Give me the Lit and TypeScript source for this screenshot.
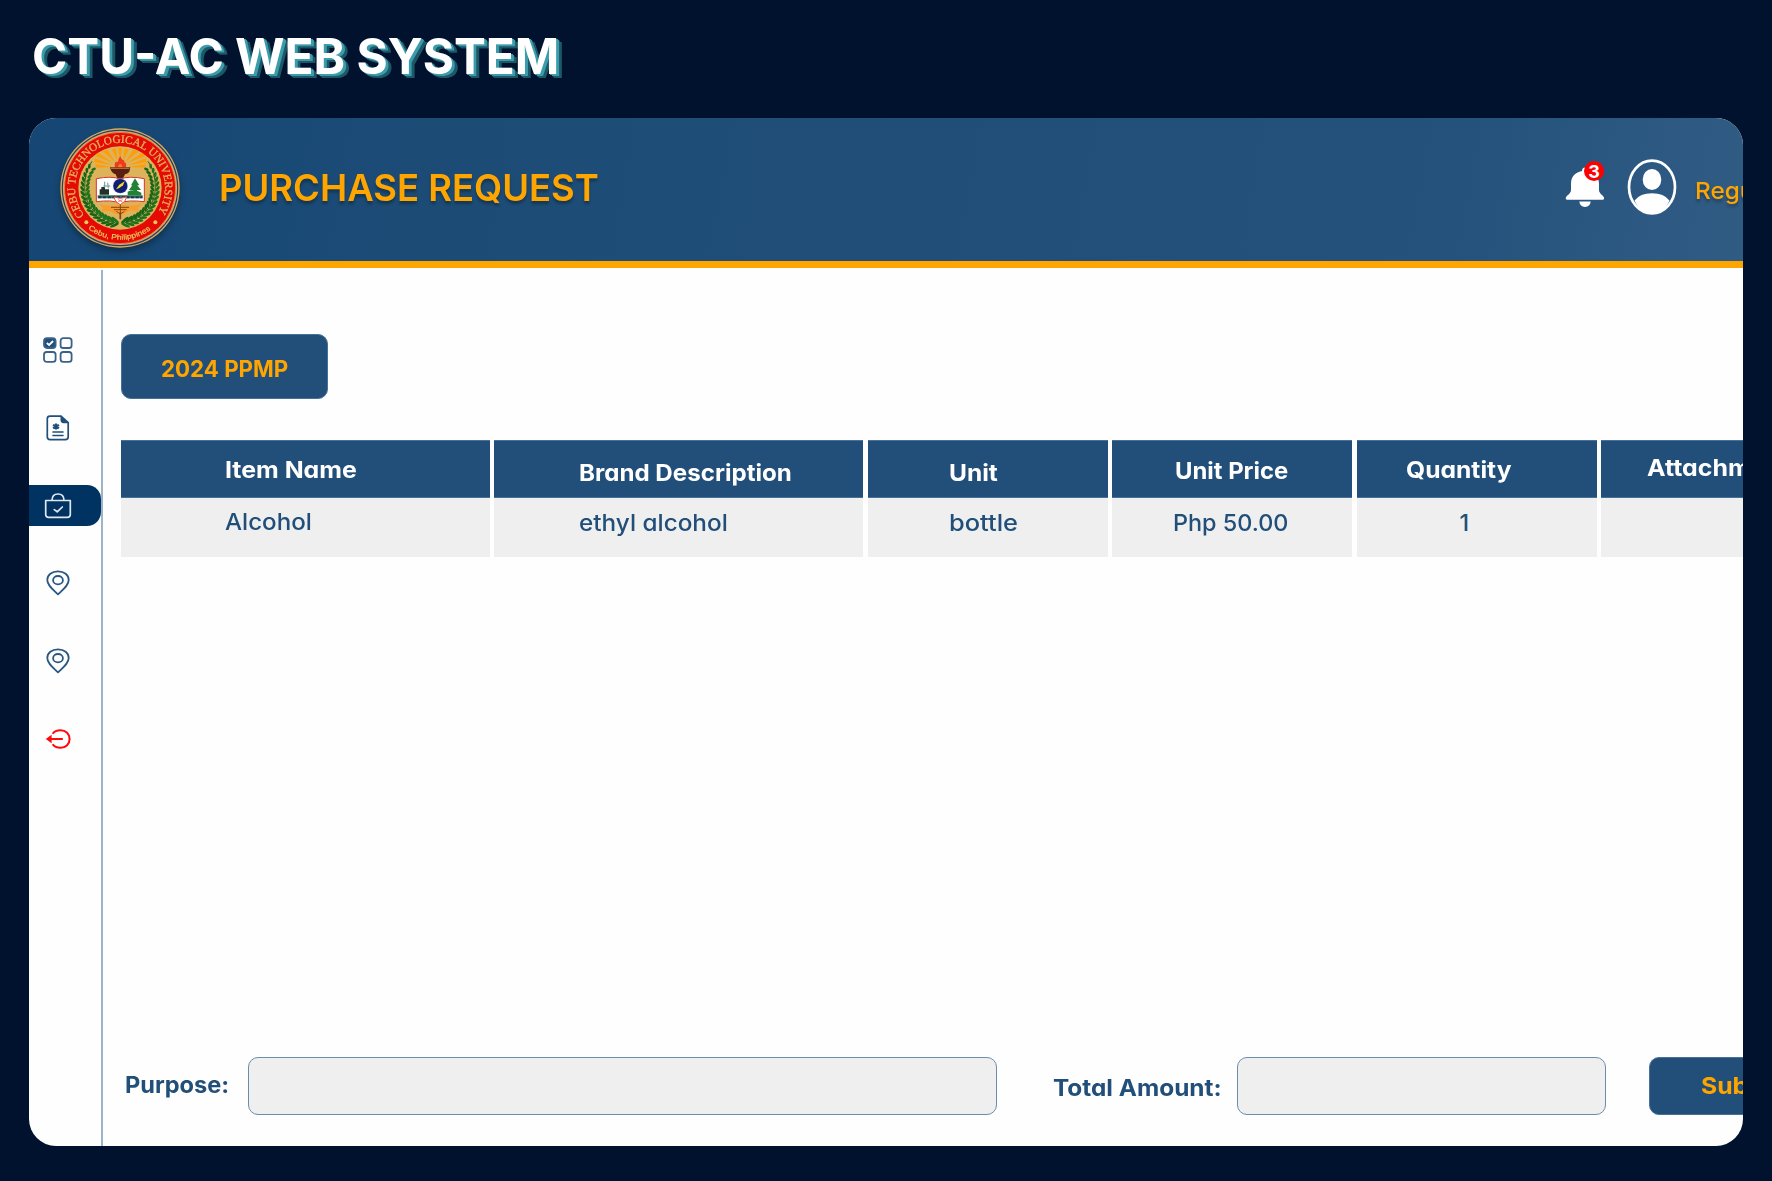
import { LitElement, html, svg, css } from "lit";
import { customElement, property } from "lit/decorators.js";

/** A line of text stretched to a set advance width. */
@customElement("ui-label")
class UiLabel extends LitElement {
  @property() text = "";
  @property({ type: Number }) width = 100;

  static styles = css`
    :host { display: block; flex: none; white-space: nowrap; }
    .ink { display: inline-block; transform-origin: 0 50%; vertical-align: top; }
  `;

  updated() {
    this.fit();
    document.fonts?.ready.then(() => this.fit());
  }

  fit() {
    const ink = this.renderRoot.querySelector<HTMLElement>(".ink");
    if (!ink) return;
    this.style.width = this.width + "px";
    const natural = ink.offsetWidth;
    if (natural) ink.style.transform = `scaleX(${this.width / natural})`;
  }

  render() {
    return html`<span class="ink">${this.text}</span>`;
  }
}

const leaves = [-1, 1].flatMap((side) =>
  Array.from({ length: 17 }, (_, i) => {
    const a = 8 + i * 7.3;
    const rad = (a * Math.PI) / 180;
    const r = 105;
    const x = 180 + side * r * Math.sin(rad);
    const y = 180 + r * Math.cos(rad);
    const size = 14 - i * 0.42;
    const base = side > 0 ? -a : a + 180;
    return { x, y, size, turn: base };
  })
);

@customElement("school-seal")
class SchoolSeal extends LitElement {
  static styles = css`
    :host { display: block; flex: none; filter: drop-shadow(0 4px 3px rgba(0, 0, 0, 0.3)); }
    .seal { display: block; width: 120px; height: 120px; }
    .serif { font: 34px "Liberation Serif", serif; fill: #e3b55e; stroke: #e3b55e; stroke-width: 0.9; }
    .sans { font: 22px "Liberation Sans", sans-serif; fill: #f0c75e; stroke: #f0c75e; stroke-width: 0.6; }
  `;

  render() {
    return html`
      <svg class="seal" viewBox="0 0 360 360">
        <defs>
          <path id="upper" d="M73 262A135 135 0 1 1 287 262" />
          <path id="lower" d="M84 302A155 155 0 0 0 276 302" />
        </defs>
        <circle cx="180" cy="180" r="179" fill="#d6ad5c" />
        <circle cx="180" cy="180" r="173" fill="none" stroke="#2b3b6b" stroke-width="3.5" />
        <circle cx="180" cy="180" r="167" fill="#e60a05" stroke="#e2a258" stroke-width="2" />
        <circle cx="180" cy="180" r="125" fill="#dcb35b" />
        <text class="serif"><textPath href="#upper" textLength="590" lengthAdjust="spacingAndGlyphs">CEBU TECHNOLOGICAL UNIVERSITY</textPath></text>
        <text class="sans"><textPath href="#lower" textLength="202" lengthAdjust="spacingAndGlyphs">Cebu, Philippines</textPath></text>
        <circle cx="79" cy="283" r="6" fill="#f0c75e" />
        <circle cx="286" cy="283" r="6" fill="#f0c75e" />
        <path fill="#ff9d08" d="M173 100L155 64 168 61zM180 98L174 60H187zM189 100L194 61 207 64zM167 103L127 69 142 65zM195 103L220 65 236 69zM162 106L107 84 116 75zM200 106L246 75 256 84zM158 111L103 103 105 91zM205 111L257 91 260 103zM158 117L108 119 106 109zM205 117L257 109 255 119z" />
        <path fill="#ef3a1d" d="M165 119Q161 99 174 102Q175 91 181 84Q184 96 192 97L193 103Q202 105 197 119Z" />
        <path fill="#ff7a21" d="M174 119Q176 105 184 109L188 119Z" />
        <path fill="#5b1f12" d="M150 118H211L208 131Q203 137 195 139L188 153H173L167 139Q154 136 150 118Z" />
        <path fill="#b8673b" d="M153 119H208V123H153Z" />
        <path fill="#fff" stroke="#d3372b" stroke-width="3" d="M109 152Q154 143 180 153Q208 143 253 152V221Q204 215 180 225Q155 215 109 221Z" />
        <path fill="#22302a" d="M119 184H147V200H119zM124 177H135V186H124z" />
        <path fill="none" stroke="#6a93a5" stroke-width="3" d="M134 161V179M143 164L145 181M130 174H151" />
        <path fill="#218236" d="M225 151L238 172H232L243 186H231V193H221V186H207L217 172H213ZM203 191Q220 181 244 194V202H203Z" />
        <path fill="#2a7650" d="M113 202H248V211H113Z" />
        <path fill="none" stroke="#29305f" stroke-width="6" stroke-dasharray="9 5" d="M115 208H247" />
        <circle cx="181" cy="174" r="22" fill="#101c75" stroke="#d9ddef" />
        <path fill="#f5df20" d="M168 184L178 170 194 160 189 172 178 180Z" />
        <path fill="#fff" stroke="#e64e49" stroke-width="3" d="M162 207L181 211 200 207Q198 221 181 230Q165 222 162 207Z" />
        <path fill="none" stroke="#e64e49" stroke-width="2" d="M174 215L188 222M188 215L174 222" />
        <path fill="#fa9c2d" d="M118 228Q150 238 181 229Q211 238 246 228L233 241 239 249 209 247 193 259H168L151 249 123 250 130 241Z" />
        <path fill="none" stroke="#7c491c" stroke-width="3" d="M153 238H207M162 245H200M181 229V274M169 250L181 258 193 250" />
        <path fill="none" stroke="#8a3f20" stroke-width="5" d="M181 253V273" />
        <path fill="none" stroke="#22641c" stroke-width="3" d="M167 285Q80 262 74 184Q73 130 96 100M193 285Q280 262 286 184Q287 130 264 100" />
        ${leaves.map(
          (l) => svg`<g transform="translate(${l.x} ${l.y}) rotate(${l.turn})">
            <ellipse cx="5" cy="-6" rx=${l.size} ry="4.2" fill="#176419" transform="rotate(-32)" />
            <ellipse cx="5" cy="6" rx=${l.size} ry="4.2" fill="#1f721d" transform="rotate(32)" />
          </g>`
        )}
      </svg>
    `;
  }
}

const icons = {
  grid: svg`<svg width="30" height="26" viewBox="0 0 30 26" fill="none" stroke="#3a6289" stroke-width="1.8">
    <rect x="1" y="1.2" width="11.6" height="9.8" rx="3" fill="#214f79"/><rect x="17.6" y="1.2" width="11" height="9.8" rx="2.6"/>
    <rect x="1" y="15" width="11.6" height="9.8" rx="2.6"/><rect x="17.6" y="15" width="11" height="9.8" rx="2.6"/>
    <path stroke="#fff" stroke-width="1.8" d="M3.8 6l2.3 2 4-4"/></svg>`,
  doc: svg`<svg width="24" height="26" viewBox="0 0 24 26" fill="none" stroke="#214f79" stroke-width="1.7">
    <path d="M4 1.2H15L22.2 7.7V22q0 2.6-2.8 2.6H4Q1.3 24.6 1.3 22V3.8Q1.3 1.2 4 1.2Z"/>
    <path fill="#214f79" stroke="none" d="M14.5 1L22.7 8.3H17.5Q14.5 8 14.5 5Z"/>
    <path d="M7 17H17M7 20.5H17" stroke-width="1.6" stroke-linecap="round"/>
    <path stroke-width="2.200" d="M10 8.500V14.500M7 10L13 13M13 10L7 13"/></svg>`,
  bag: svg`<svg width="28" height="28" viewBox="0 0 28 28" fill="none" stroke="#dfe7ef" stroke-width="1.7" stroke-linejoin="round">
    <path d="M1.7 8.500H26.300V22.500q0 2.800-3 2.800H4.700q-3 0-3-2.800Z"/>
    <path d="M8 8.500Q8 2 14 2T20 8.500"/><path stroke-linecap="round" d="M10.300 17.600L13.200 19.800 18.300 15"/></svg>`,
  pin: svg`<svg width="24" height="26" viewBox="0 0 24 26" fill="none" stroke="#2a5780" stroke-width="1.8">
    <path stroke-linejoin="round" d="M12 24.300C7 19.500 1.300 15.500 1.300 10C1.300 5 5.800 1.300 12 1.300S22.700 5 22.700 10C22.700 15.500 17 19.500 12 24.300Z"/>
    <ellipse cx="12" cy="10.200" rx="4.900" ry="4.200"/></svg>`,
  exit: svg`<svg width="26" height="20" viewBox="0 0 26 20" fill="none" stroke="#fe0a0a" stroke-width="2">
    <path d="M7.600 4.700Q10 1.200 15.500 1.200C21 1.200 24.600 5 24.600 10S21 18.800 15.500 18.800Q10 18.800 7.600 15.300"/>
    <path d="M5 10H17.800"/><path fill="#fe0a0a" stroke="none" d="M.8 10L6.600 5.800V14.200Z"/></svg>`,
};

const nav = [
  { icon: icons.grid, active: false },
  { icon: icons.doc, active: false },
  { icon: icons.bag, active: true },
  { icon: icons.pin, active: false },
  { icon: icons.pin, active: false },
  { icon: icons.exit, active: false },
];

/* text, inset from the left, inset from the top, width */
type Cell = [string, number, number, number];
const columns: { span: number; head: Cell; cell?: Cell }[] = [
  { span: 368.5, head: ["Item Name", 103.5, 12.5, 132], cell: ["Alcohol", 103.5, 7.5, 87] },
  { span: 369, head: ["Brand Description", 85, 15.5, 213], cell: ["ethyl alcohol", 85, 8.5, 149] },
  { span: 240, head: ["Unit", 81, 15.5, 49], cell: ["bottle", 81, 8.5, 68.5] },
  { span: 240, head: ["Unit Price", 63, 13.5, 113], cell: ["Php 50.00", 61, 8.5, 115] },
  { span: 240, head: ["Quantity", 49.5, 12.5, 105], cell: ["1", 102.5, 8.5, 10] },
  { span: 240, head: ["Attachment", 46, 10.5, 143] },
];

@customElement("app-root")
class AppRoot extends LitElement {
  static styles = css`
    :host {
      display: block;
      font-family: Inter, "Open Sans", sans-serif;
      font-feature-settings: "cv11";
      color: #214f79;
    }
    * { box-sizing: border-box; }
    .page {
      height: 1181px;
      background: #00122d;
      padding: 28px 29px 0;
      display: flex;
      flex-direction: column;
      overflow: hidden;
    }
    .brand {
      height: 90px;
      padding-left: 3px;
      font-size: 50px;
      line-height: 56px;
      font-weight: 700;
      color: #fff;
      text-shadow: 1px 1px #3c9cac, 2px 1px #3c9cac, 3px 2px #3c9cac, 4px 3px #1d5867, 5px 4px #1d5867, 6px 4px #1d5867;
    }
    .card {
      flex: none;
      width: 1714px;
      height: 1028px;
      border-radius: 27px;
      background: #fefefe;
      overflow: hidden;
      display: flex;
      flex-direction: column;
    }
    .top {
      flex: none;
      height: 150px;
      border-bottom: 7px solid #ffa500;
      background: linear-gradient(100deg, #154674 0%, #1c4c76 25%, #224f79 60%, #25527c 83%, #305c84 100%);
      display: flex;
      align-items: flex-start;
    }
    .seal-box { padding: 9.5px 0 0 31px; }
    .heading {
      padding: 47px 0 0 38.5px;
      font-size: 37.5px;
      line-height: 46px;
      font-weight: 600;
      color: #ffa500;
      text-shadow: 0 3px 3px rgba(0, 0, 0, 0.3);
    }
    .grow { flex: 1; }
    .bell { position: relative; width: 40px; height: 44px; margin: 46px 22px 0 0; flex: none; }
    .bell svg { display: block; }
    .count {
      position: absolute;
      left: 19px;
      top: -3px;
      width: 20px;
      height: 20px;
      border-radius: 50%;
      background: #fe0000;
      color: #fff;
      font-size: 18px;
      line-height: 22px;
      font-weight: 700;
      text-align: center;
    }
    .avatar { display: block; margin-top: 39.5px; flex: none; }
    .role {
      margin: 56.5px 0 0 17.5px;
      width: 48.5px;
      font-size: 23.5px;
      line-height: 32px;
      font-weight: 500;
      color: #ffa500;
      text-shadow: 0 3px 3px rgba(0, 0, 0, 0.3);
      flex: none;
    }
    .body { flex: 1; display: flex; min-height: 0; }
    .side {
      width: 74px;
      flex: none;
      margin-top: 2px;
      padding-top: 59.5px;
      border-right: 2px solid #9fb3c8;
      display: flex;
      flex-direction: column;
      gap: 36.2px;
    }
    .item { height: 41.5px; display: flex; align-items: center; padding-right: 14px; justify-content: center; }
    .item svg { display: block; }
    .active { background: #003362; border-radius: 0 14px 14px 0; }
    .main { flex: none; width: 1720px; padding: 65.5px 0 0 18px; display: flex; flex-direction: column; }
    .btn {
      background: #224f79;
      color: #ffa500;
      border: 1px solid #48719a;
      border-radius: 10px;
      font-size: 23px;
      line-height: 32px;
      font-weight: 700;
    }
    .ppmp { width: 206.5px; height: 65.5px; padding: 18px 0 0 39px; }
    .table { display: flex; gap: 4.6px; margin-top: 41px; height: 499.5px; align-items: flex-start; }
    .col { flex: none; }
    .head, .cell { font-size: 23px; line-height: 32px; }
    .head {
      height: 58px;
      background: #224f79;
      border-bottom: 1px solid #48719a;
      border-top: 1px solid #48719a;
      color: #fff;
      font-weight: 700;
    }
    .cell { height: 58.5px; background: #efefef; font-weight: 500; }
    .form {
      margin-top: 117px;
      display: flex;
      align-items: flex-start;
      font-size: 23px;
      line-height: 32px;
      font-weight: 700;
    }
    .purpose { padding: 12.5px 0 0 3.5px; width: 127px; flex: none; }
    .total { padding: 15.5px 0 0 56px; width: 240px; flex: none; }
    .field { height: 58.5px; border: 1px solid #6d8cab; border-radius: 10px; background: #efefef; flex: none; }
    .wide { width: 749px; }
    .narrow { width: 369px; }
    .submit { margin-left: 42.5px; width: 206px; height: 58.5px; padding: 12px 0 0 51.5px; flex: none; }
  `;

  label([text, left, top, width]: Cell) {
    return html`<ui-label style="padding:${top}px 0 0 ${left}px" .text=${text} .width=${width}></ui-label>`;
  }

  render() {
    return html`
      <div class="page">
        <div class="brand"><ui-label .text=${"CTU-AC WEB SYSTEM"} .width=${527}></ui-label></div>
        <div class="card">
          <div class="top">
            <div class="seal-box"><school-seal></school-seal></div>
            <div class="heading"><ui-label .text=${"PURCHASE REQUEST"} .width=${380}></ui-label></div>
            <div class="grow"></div>
            <div class="bell">
              <svg width="40" height="44" viewBox="0 0 40 44" fill="#fff">
                <path d="M17 7Q17 3.500 20 3.500T23 7C30.500 8.500 34 13 34 20V26C34 30 39.200 31.500 39.200 34.500Q39 35.800 37.500 35.800H2.300Q.8 35.800.7 34.500C.7 31.500 6 30 6 26V20C6 13 9.500 8.500 17 7Z" />
                <path d="M14.300 37.600H25.700Q25 43 20 43T14.300 37.600Z" />
              </svg>
              <div class="count">3</div>
            </div>
            <svg class="avatar" width="50" height="58" viewBox="0 0 50 58">
              <ellipse cx="25" cy="29" rx="23" ry="26.400" fill="none" stroke="#fff" stroke-width="2.700" />
              <ellipse cx="25" cy="21.500" rx="9.300" ry="10.500" fill="#fff" />
              <path fill="#fff" d="M7.500 42.500Q13 35.200 25 35.200T42.500 42.500Q36.500 56 25 56T7.500 42.500Z" />
            </svg>
            <div class="role"><ui-label .text=${"Regular"} .width=${90}></ui-label></div>
          </div>
          <div class="body">
            <div class="side">
              ${nav.map((n) => html`<div class="item ${n.active ? "active" : ""}">${n.icon}</div>`)}
            </div>
            <div class="main">
              <div class="btn ppmp"><ui-label .text=${"2024 PPMP"} .width=${127}></ui-label></div>
              <div class="table">
                ${columns.map(
                  (c) => html`<div class="col" style="width:${c.span}px">
                    <div class="head">${this.label(c.head)}</div>
                    <div class="cell">${c.cell ? this.label(c.cell) : ""}</div>
                  </div>`
                )}
              </div>
              <div class="form">
                <div class="purpose"><ui-label .text=${"Purpose:"} .width=${104.5}></ui-label></div>
                <div class="field wide"></div>
                <div class="total"><ui-label .text=${"Total Amount:"} .width=${168.5}></ui-label></div>
                <div class="field narrow"></div>
                <div class="btn submit"><ui-label .text=${"Submit"} .width=${86}></ui-label></div>
              </div>
            </div>
          </div>
        </div>
      </div>
    `;
  }
}
